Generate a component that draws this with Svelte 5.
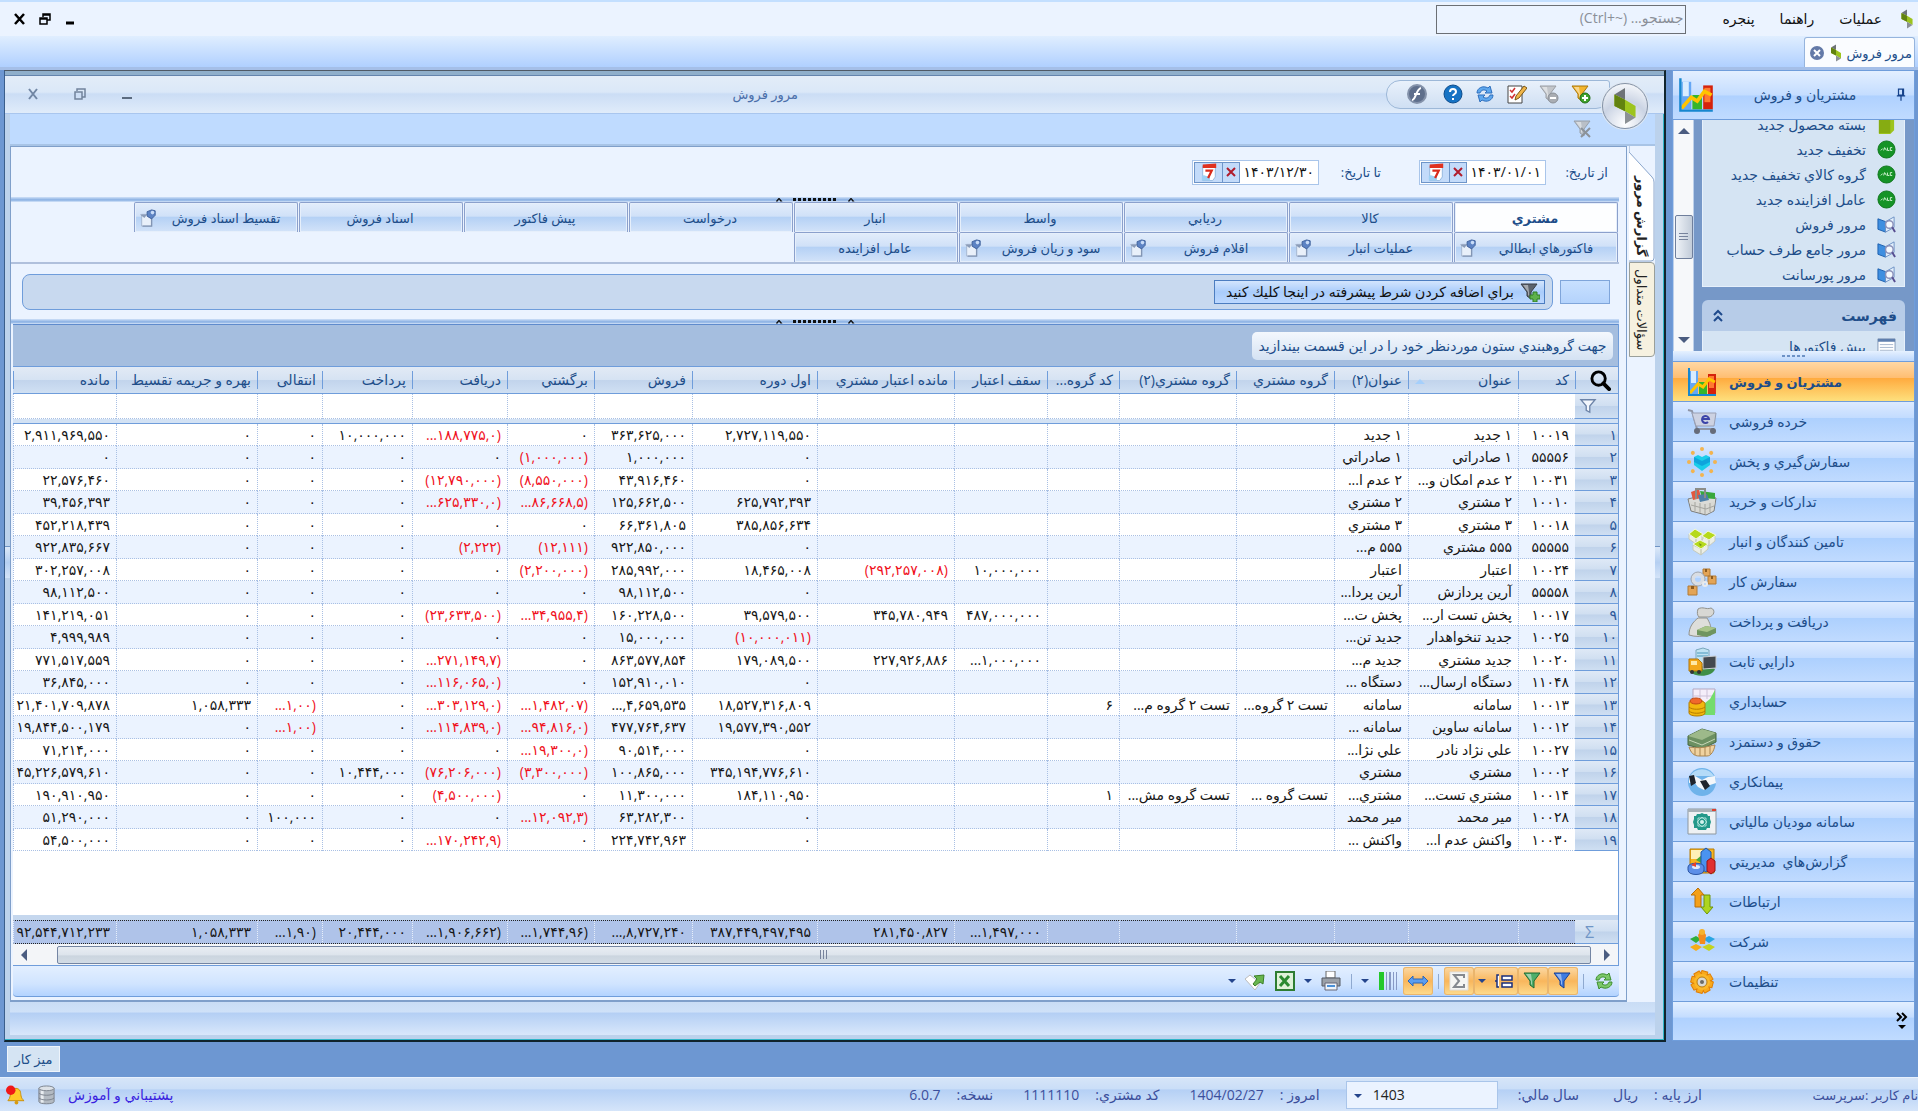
<script lang="ts">
  type Kind = 'num' | 'text';

  interface Column {
    label: string;
    width: number;
    kind: Kind;
    sorted?: boolean;
  }

  const columns: Column[] = [
    { label: 'كد', width: 57, kind: 'text' },
    { label: 'عنوان', width: 110, kind: 'text', sorted: true },
    { label: 'عنوان(٢)', width: 74, kind: 'text' },
    { label: 'گروه مشتري', width: 98, kind: 'text' },
    { label: 'گروه مشتري(٢)', width: 117, kind: 'text' },
    { label: 'كد گروه...', width: 72, kind: 'num' },
    { label: 'سقف اعتبار', width: 93, kind: 'num' },
    { label: 'مانده اعتبار مشتري', width: 137, kind: 'num' },
    { label: 'اول دوره', width: 125, kind: 'num' },
    { label: 'فروش', width: 98, kind: 'num' },
    { label: 'برگشتي', width: 87, kind: 'num' },
    { label: 'دريافت', width: 95, kind: 'num' },
    { label: 'پرداخت', width: 90, kind: 'num' },
    { label: 'انتقالى', width: 65, kind: 'num' },
    { label: 'بهره و جريمه تقسيط', width: 141, kind: 'num' },
    { label: 'مانده', width: 104, kind: 'num' },
  ];

  const rows = [
    ['10019', '1 جديد', '1 جديد', '', '', '', '', '', '2,727,119,550', '363,625,000', '0', '...188,775,0)', '10,000,000', '0', '0', '2,911,969,550'],
    ['55556', '1 صادراتي', '1 صادراتي', '', '', '', '', '', '0', '1,000,000', '(1,000,000)', '0', '0', '0', '0', '0'],
    ['10031', '2 عدم امكان و...', '2 عدم ا...', '', '', '', '', '', '0', '43,916,460', '(8,550,000)', '(12,790,000)', '0', '0', '0', '22,576,460'],
    ['10010', '2 مشتري', '2 مشتري', '', '', '', '', '', '625,792,393', '125,662,500', '...86,668,5)', '...625,330,0)', '0', '0', '0', '39,456,393'],
    ['10018', '3 مشتري', '3 مشتري', '', '', '', '', '', '385,856,634', '66,361,805', '0', '0', '0', '0', '0', '452,218,439'],
    ['55555', '555 مشتري', '555 م...', '', '', '', '', '', '0', '922,850,000', '(12,111)', '(2,222)', '0', '0', '0', '922,835,667'],
    ['10024', 'اعتبار', 'اعتبار', '', '', '', '10,000,000', '(292,257,008)', '18,465,008', '285,992,000', '(2,200,000)', '0', '0', '0', '0', '302,257,008'],
    ['55558', 'آرين پردازش', 'آرين پردا...', '', '', '', '', '', '0', '98,112,500', '0', '0', '0', '0', '0', '98,112,500'],
    ['10017', 'پخش تست ار...', 'پخش ت...', '', '', '', '487,000,000', '345,780,949', '39,579,500', '160,228,500', '...34,955,4)', '(23,633,500)', '0', '0', '0', '141,219,051'],
    ['10025', 'جديد تنخواهدار', 'جديد تن...', '', '', '', '', '', '(10,000,011)', '15,000,000', '0', '0', '0', '0', '0', '4,999,989'],
    ['10020', 'جديد مشتري', 'جديد م...', '', '', '', '...1,000,000', '227,926,886', '179,089,500', '863,577,854', '0', '...271,149,7)', '0', '0', '0', '771,517,559'],
    ['11048', 'دستگاه ارسال...', 'دستگاه ...', '', '', '', '', '', '0', '152,910,010', '0', '...116,065,0)', '0', '0', '0', '36,845,000'],
    ['10013', 'سامانه', 'سامانه', 'تست 2 گروه...', 'تست 2 گروه م...', '6', '', '', '18,527,316,809', '...,4,659,535', '...1,482,07)', '...303,129,0)', '0', '...1,00)', '1,058,333', '21,401,709,878'],
    ['10012', 'سامانه ساوين', 'سامانه ...', '', '', '', '', '', '19,577,390,552', '477,764,637', '...94,816,0)', '...114,839,0)', '0', '...1,00)', '0', '19,844,500,179'],
    ['10027', 'علي نژاد نادر', 'علي نژا...', '', '', '', '', '', '0', '90,514,000', '...19,300,0)', '0', '0', '0', '0', '71,214,000'],
    ['10002', 'مشتري', 'مشتري', '', '', '', '', '', '345,194,776,610', '100,865,000', '(3,300,000)', '(76,206,000)', '10,444,000', '0', '0', '45,226,579,610'],
    ['10014', 'مشتري تست...', 'مشتري...', 'تست گروه ...', 'تست گروه مش...', '1', '', '', '184,110,950', '11,300,000', '0', '(4,500,000)', '0', '0', '0', '190,910,950'],
    ['10028', 'مير محمد', 'مير محمد', '', '', '', '', '', '0', '63,282,300', '...12,092,3)', '0', '0', '100,000', '0', '51,290,000'],
    ['10030', 'واكنش عدم ا...', 'واكنش ...', '', '', '', '', '', '0', '224,742,963', '0', '...170,242,9)', '0', '0', '0', '54,500,000'],
  ];

  const totals = ['', '', '', '', '', '', '...1,497,000', '281,450,827', '387,449,497,495', '...,8,727,240', '...1,744,96)', '...1,906,662)', '20,444,000', '...1,90)', '1,058,333', '92,544,712,233'];

  const topTabs = [
    { label: 'مشتري' },
    { label: 'كالا' },
    { label: 'رديابي' },
    { label: 'واسط' },
    { label: 'انبار' },
    { label: 'درخواست' },
    { label: 'پيش فاكتور' },
    { label: 'اسناد فروش' },
    { label: 'تقسيط اسناد فروش', pinned: true },
  ];
  const bottomTabs = [
    { label: 'فاكتورهاي ابطالي', pinned: true },
    { label: 'عمليات انبار', pinned: true },
    { label: 'اقلام فروش', pinned: true },
    { label: 'سود و زيان فروش', pinned: true },
    { label: 'عامل افزاينده' },
  ];

  const links = [
    { label: 'بسته محصول جديد', icon: 'package' },
    { label: 'تخفيف جديد', icon: 'sale' },
    { label: 'گروه كالاي تخفيف جديد', icon: 'sale' },
    { label: 'عامل افزاينده جديد', icon: 'sale' },
    { label: 'مرور فروش', icon: 'review' },
    { label: 'مرور جامع طرف حساب', icon: 'review' },
    { label: 'مرور پورسانت', icon: 'review' },
  ];

  const modules = [
    { label: 'مشتريان و فروش', icon: 'chart' },
    { label: 'خرده فروشي', icon: 'cart' },
    { label: 'سفارش‌گيري و پخش', icon: 'spread' },
    { label: 'تداركات و خريد', icon: 'basket' },
    { label: 'تامين كنندگان و انبار', icon: 'boxes' },
    { label: 'سفارش كار', icon: 'work' },
    { label: 'دريافت و پرداخت', icon: 'bag' },
    { label: 'دارايي ثابت', icon: 'assets' },
    { label: 'حسابداري', icon: 'coins' },
    { label: 'حقوق و دستمزد', icon: 'salary' },
    { label: 'پيمانكاري', icon: 'hands' },
    { label: 'سامانه موديان مالياتي', icon: 'tax' },
    { label: 'گزارش‌هاي  مديريتي', icon: 'report' },
    { label: 'ارتباطات', icon: 'arrows' },
    { label: 'شركت', icon: 'company' },
    { label: 'تنظيمات', icon: 'gear' },
  ];

  // the shortcut keeps its own left-to-right order inside the Persian hint
  const searchHint = 'جستجو... \u2066(Ctrl+~)\u2069';

  let activeModule = $state(0);
  let activeTab = $state('مشتري');
  let dateFrom = $state(fa('1403/01/01'));
  let dateTo = $state(fa('1403/12/30'));

  function fa(value: string) {
    return value.replace(/\d/g, (d) => '۰۱۲۳۴۵۶۷۸۹'[Number(d)]);
  }

  const angles = [0, 45, 90, 135, 180, 225, 270, 315];
</script>

{#snippet logo()}
  <svg class="logo" viewBox="0 0 24 36" aria-hidden="true">
    <path d="M12 1v11L2 7z" fill="#6e7377" />
    <path d="M2 7l10 5 10 6v11l-10-6L2 18z" fill="#9dc41e" />
    <path d="M2 7l10 5v11L2 18z" fill="#628210" />
    <path d="M22 29l-10 6V23z" fill="#8b9094" />
  </svg>
{/snippet}

{#snippet funnel(fill: string, stroke: string, badge: string)}
  <svg class="ic" viewBox="0 0 20 20" aria-hidden="true">
    <path d="M1 2h16l-6 8v7l-4-3v-4z" {fill} {stroke} />
    <path d="M3 3h5l1 7v4l-1-1v-3z" fill="#fff" opacity=".45" />
    {#if badge === 'plus'}
      <circle cx="14" cy="14" r="5" fill="#3fa32c" stroke="#1e6c14" />
      <path d="M14 11v6M11 14h6" stroke="#fff" stroke-width="2" />
    {:else if badge === 'minus'}
      <circle cx="14" cy="14" r="5" fill="#a9adb3" stroke="#8a8f96" />
      <path d="M11 14h6" stroke="#fff" stroke-width="2" />
    {:else if badge === 'cross'}
      <path d="M8 9l9 9M17 9l-9 9" stroke="#8c9299" stroke-width="2" />
    {:else if badge === 'green'}
      <path d="M13 10h4v3h3v4h-3v3h-4v-3h-3v-4h3z" fill="#5fb24a" stroke="#2f7d22" />
    {/if}
  </svg>
{/snippet}

{#snippet sync(color: string, edge: string)}
  <svg class="ic" viewBox="0 0 20 20" aria-hidden="true">
    <path d="M2 9c0-5 6-8 11-5l2-2 2 7h-7l2-2c-3-2-6-1-7 2z" fill={color} stroke={edge} />
    <path d="M18 11c0 5-6 8-11 5l-2 2-2-7h7l-2 2c3 2 6 1 7-2z" fill={color} stroke={edge} />
  </svg>
{/snippet}

{#snippet calendar()}
  <svg class="ic" viewBox="0 0 20 20" aria-hidden="true">
    <path d="M3 3h14v12l-3 4H3z" fill="#fff" stroke="#8fb4dc" />
    <path d="M2 14c3-3 6 2 9 0v5H2z" fill="#9cd0f4" />
    <path d="M3 1l15-1v5L3 5z" fill="#e0311f" />
    <path d="M6 8h7l-4 8" fill="none" stroke="#d92b1b" stroke-width="2.5" />
  </svg>
{/snippet}

{#snippet icon(name: string)}
  <svg class="mod" viewBox="0 0 30 30" aria-hidden="true">
    {#if name === 'chart'}
      <path d="M3 4h8v23H3z" fill="#65a7f5" /><path d="M4 4h5v12H4z" fill="#d9ecff" />
      <path d="M12 15h8v12h-8z" fill="#35b52c" />
      <path d="M21 7h8v20h-8z" fill="#d5220c" /><path d="M22 9h5v12h-5z" fill="#ff7a30" />
      <path d="M3 26l8-9 5 3 6-8 6 3" fill="none" stroke="#ffc400" stroke-width="3" />
      <path d="M2 1v27h27" fill="none" stroke="#1787cf" stroke-width="2" />
    {:else if name === 'cart'}
      <path d="M1 3l4 1 5 18h17" fill="none" stroke="#8f95a6" stroke-width="2" />
      <path d="M5 6h24l-2 13H9z" fill="#cdd2e2" stroke="#9aa0b4" />
      <path d="M16 12h6a3.500 3.500 0 1 0-1 3" fill="none" stroke="#3c44a8" stroke-width="2" />
      <circle cx="10" cy="24" r="3" fill="#666c7a" /><circle cx="26" cy="24" r="3" fill="#666c7a" />
    {:else if name === 'spread'}
      {#each angles as a}
        <circle cx="15" cy="2" r="2" fill="#f2b450" transform="rotate({a} 15 15)" />
      {/each}
      <path d="M7 10l4-2 4 2 4-2 4 2v8l-8 6-8-6z" fill="#19cdea" />
      <path d="M7 10l8 4 8-4v5l-8 4-8-4z" fill="#0fa4dc" />
    {:else if name === 'basket'}
      <path d="M1 12l16-4 12 3-2 13-8 4L4 24z" fill="#dcdcd8" stroke="#7d7d7a" />
      <path d="M4 5l8-3 2 9-8 2z" fill="#e2583e" /><path d="M13 4l15 2v6l-13-1z" fill="#38a83c" />
      <path d="M11 8l9-1 2 6-9 2z" fill="#4d7fa8" />
      <path d="M2 14l16 3 10-3-2 10-7 3-14-4z" fill="#d9d9d4" />
      <path d="M4 18l15 4 8-3M8 15v9M13 16v10M18 17v10M23 16v9" fill="none" stroke="#a5a59f" />
      <path d="M9 12V2h9v9" fill="none" stroke="#8d8d88" stroke-width="2" />
    {:else if name === 'boxes'}
      <path d="M2 7l7 4v6l-7-5zM9 11l7-4v5l-7 5zM15 9l7 4v6l-7-5zM22 13l6-5v6l-6 5zM6 18l8 4v6l-8-5zM14 22l7-5v5l-7 6z" fill="#eceee6" stroke="#c6cabb" />
      <path d="M2 7l6-5 8 5-7 5zM15 9l6-5 8 4-7 5zM6 17l7-4 8 4-7 5z" fill="#b6d91c" stroke="#f4f8e0" />
      <path d="M12 16l3 2-2 1z" fill="#6f8f10" />
    {:else if name === 'work'}
      <path d="M16 2h7v7h-7zM21 9h8v8h-8zM1 19h9v9H1z" fill="#e3a456" stroke="#b27a34" />
      <path d="M18 2h2v3h-2zM24 9h2v3h-2zM4 19h3v3H4z" fill="#8c5a1e" />
      <circle cx="11" cy="12" r="5" fill="none" stroke="#d9dde3" stroke-width="4" />
      <circle cx="11" cy="12" r="7" fill="none" stroke="#9ea4ad" />
      <circle cx="18" cy="17" r="2" fill="none" stroke="#e9ebee" stroke-width="2" />
    {:else if name === 'bag'}
      <path d="M11 2c5-3 8 1 13-1 5 2 3 8-2 9H12c-2-2-2-5-1-8z" fill="#d8d8d4" stroke="#92928d" />
      <path d="M11 11h9c3 5 5 10 4 17-8 2-16 2-22 0 0-8 4-13 9-17z" fill="#dededa" stroke="#92928d" />
      <path d="M10 23l9-4 10 2v5l-9 4-10-2z" fill="#6f9560" /><path d="M10 23l9-4 10 2-9 4z" fill="#a8c489" />
    {:else if name === 'assets'}
      <path d="M2 24c6-6 20-6 26-2-2 7-18 10-26 2z" fill="#3f8e47" />
      <path d="M9 3l7-2 6 2v12l-6 3-7-3z" fill="#bfe2f2" stroke="#7aa7bc" /><path d="M10 6h11M10 9h11" stroke="#4a98bb" />
      <path d="M16 10l13-1v12l-13 1z" fill="#43484e" stroke="#c9ccd0" />
      <path d="M2 12h9l4 4v8H2z" fill="#f3a81b" stroke="#b1740b" /><path d="M4 14h6v4H4z" fill="#ffe9a6" />
      <circle cx="5" cy="25" r="2" fill="#333" /><circle cx="12" cy="25" r="2" fill="#333" />
    {:else if name === 'coins'}
      <path d="M6 2h22v24H6z" fill="#f5eefa" stroke="#b5a8c0" /><path d="M13 2v10M20 2v10M6 9h22" stroke="#cdc1d8" />
      <path d="M16 28l2-12 5-4 5-9v25z" fill="#74dc6c" />
      <path d="M2 16v10c0 4 16 4 16 0v-9c0-5-16-5-16-1z" fill="#f2b80e" stroke="#b57c00" />
      <path d="M2 20c3 3 12 3 16 0M2 24c3 3 12 3 16 0" fill="none" stroke="#b57c00" />
      <ellipse cx="9" cy="14" rx="6" ry="3" fill="#f0682c" stroke="#c04812" />
    {:else if name === 'salary'}
      <path d="M1 9l14-7 14 4v9l-14 7L1 18z" fill="#6c9062" stroke="#47683f" />
      <path d="M1 9l14-7 14 4-14 7z" fill="#9db98a" /><path d="M2 13l13 5 13-6" fill="none" stroke="#c8d8b8" />
      <path d="M2 20c2 6 5 9 10 9h8c4 0 7-5 8-11-8 1-10 4-26 2z" fill="#f0d2a0" stroke="#a98550" />
      <path d="M8 21v7M13 21v8M18 20v9M23 19v8" stroke="#a98550" />
    {:else if name === 'hands'}
      <circle cx="15" cy="15" r="14" fill="#6fb3ea" /><path d="M3 9a14 14 0 0 1 24 0z" fill="#b4dbf8" />
      <path d="M2 11l6-2 7 4 6-3 7-1 1 7-6 2-6 5-6-3-4-5-5 1z" fill="#f4f7fa" />
      <path d="M2 9l5-1 2 8-5 3zM13 14l6-1 4 6-5 4z" fill="#1e242c" />
    {:else if name === 'tax'}
      <path d="M1 2h28v25H1z" fill="#eef1f3" stroke="#8d979f" /><path d="M1 2h28v3H1z" fill="#a7b1b8" /><path d="M25 2h4v2h-4z" fill="#de4030" />
      <path d="M10 7h3l2-1 2 1h3l1 2h2v3l1 3-1 3v3h-3l-1 2h-8l-1-2H7v-3l-1-3 1-3V9h2z" fill="#23998a" />
      <path d="M11 11h8v8h-8zM15 10l5 5-5 5-5-5z" fill="none" stroke="#a9e0d6" /><circle cx="15" cy="15" r="2" fill="#d4f2ec" />
    {:else if name === 'report'}
      <path d="M3 2h24v24H3z" fill="#f8b41e" stroke="#b67a04" /><path d="M4 3h14v9H4z" fill="#fff0b8" />
      <path d="M9 13l7-6v10z" fill="#4aa83c" />
      <path d="M14 5l5-4 5 4v17l-5 3-5-3z" fill="#4a93ef" stroke="#1f57a5" />
      <path d="M20 14l4-3 4 3v10l-4 3-4-3z" fill="#e03030" stroke="#961414" />
      <path d="M1 20c0-5 16-5 16 0v3c0 6-16 6-16 0z" fill="#5d8fe8" stroke="#2b55a5" /><ellipse cx="9" cy="20" rx="4" ry="2" fill="#dfe9fb" />
      <path d="M4 18l5-3v5z" fill="#e8402c" />
    {:else if name === 'arrows'}
      <path d="M8 20V8H4l7-7 6 7h-3v12z" fill="#f4a019" stroke="#b96f06" />
      <path d="M17 8h6v12h3l-6 7-6-7h3z" fill="#aed51f" stroke="#6f940c" />
    {:else if name === 'company'}
      <path d="M3 12l6-3 5 3-5 4z" fill="#2fae3c" /><path d="M16 12l6-3 6 3-6 4z" fill="#2aa6e2" />
      <path d="M3 20l6-3 6 3-6 4z" fill="#f6ad18" /><path d="M15 20l7-3 6 3-6 4z" fill="#c3d31e" />
      <path d="M11 8l4-6 4 6-1 9h-5z" fill="#f28c1c" /><circle cx="15" cy="5" r="3" fill="#f6b32c" />
    {:else}
      {#each angles as a}
        <path d="M12 4h6l1 6h-8z" fill="#f8a91c" stroke="#e07f06" transform="rotate({a + 15} 15 15)" />
      {/each}
      <circle cx="15" cy="15" r="8" fill="#fbb828" /><circle cx="15" cy="15" r="5" fill="#d9d9d2" stroke="#b67b14" />
      <circle cx="15" cy="15" r="2" fill="#6b6b66" />
    {/if}
  </svg>
{/snippet}

{#snippet linkIcon(name: string)}
  <svg class="ic" viewBox="0 0 20 20" aria-hidden="true">
    {#if name === 'package'}
      <path d="M2 3l5-3h11v16l-4 4H2z" fill="#9dc41e" /><path d="M2 5h12v14H2z" fill="#86ac12" />
    {:else if name === 'sale'}
      <circle cx="10" cy="10" r="9" fill="#159326" stroke="#0b7418" />
      <path d="M4 11l2-2M7 11l1-3 2 3M11 8v3h2M16 8h-2v3h2" fill="none" stroke="#d8f5d8" />
    {:else if name === 'review'}
      <path d="M1 4l8 3v11l-8-3z" fill="#3f8fe0" stroke="#1c5fae" /><path d="M9 7l9-5v11l-9 5z" fill="#e4f0fc" stroke="#6a90c4" />
      <circle cx="13" cy="10" r="4" fill="#fff" fill-opacity=".6" stroke="#8a8fb8" stroke-width="1.500" /><path d="M16 13l3 5" stroke="#574d90" stroke-width="2" />
    {:else}
      <path d="M1 2h18v18H1z" fill="#fff" stroke="#8298b8" /><path d="M1 2h18v3H1z" fill="#5f7fae" /><path d="M3 8h14M3 11h14M3 14h14" stroke="#a7b7cf" />
    {/if}
  </svg>
{/snippet}

{#snippet cols()}
  <colgroup>
    <col style:width="43px" />
    {#each columns as col, i}
      <col style:width={i === columns.length - 1 ? 'auto' : `${col.width}px`} />
    {/each}
  </colgroup>
{/snippet}

{#snippet splitter()}
  <div class="splitter" aria-hidden="true"><i></i><b></b><i></i></div>
{/snippet}

{#snippet tabRow(tabs: { label: string; pinned?: boolean }[])}
  <div class="tab-row" role="tablist">
    {#each tabs as tab}
      <button
        class="tab"
        class:active={activeTab === tab.label}
        role="tab"
        aria-selected={activeTab === tab.label}
        onclick={() => (activeTab = tab.label)}
      >
        <span>{tab.label}</span>
        {#if tab.pinned}
          <svg class="pin-doc" viewBox="0 0 20 20" aria-hidden="true">
            <path d="M3 6h11v13H3z" fill="#e9f0fa" stroke="#a3b4ce" /><path d="M4 19h10V8" fill="none" stroke="#8295b4" stroke-width="1.500" />
            <path d="M1 6h8l-3 4z" fill="#8b9cb8" />
            <path d="M9 3l5-2 4 1v5l-4 4-5-3z" fill="#5d83c4" stroke="#3b5d99" /><circle cx="15" cy="4" r="2" fill="#c8dcf8" />
          </svg>
        {/if}
      </button>
    {/each}
  </div>
{/snippet}

<div class="app" dir="rtl">
  <header class="menubar">
    {@render logo()}
    <nav>
      <a href="#ops">عمليات</a>
      <a href="#help">راهنما</a>
      <a href="#window">پنجره</a>
    </nav>
    <input class="search" type="text" aria-label="جستجو" placeholder={searchHint} />
    <div class="win-buttons">
      <button aria-label="كوچك كردن"><svg viewBox="0 0 12 12"><path d="M2 10h8" stroke="#000" stroke-width="3" /></svg></button>
      <button aria-label="بازگرداندن"><svg viewBox="0 0 12 12"><path d="M4 4V1h7v6H8M1 5h7v6H1zM1 6h7M4 2h7" fill="none" stroke="#000" stroke-width="1.500" /></svg></button>
      <button aria-label="بستن"><svg viewBox="0 0 12 12"><path d="M1 1l9 10M10 1L1 11" stroke="#000" stroke-width="2.500" /></svg></button>
    </div>
  </header>

  <div class="doc-tabs">
    <div class="doc-tab">
      <span>مرور فروش</span>
      {@render logo()}
      <button aria-label="بستن برگه">
        <svg viewBox="0 0 16 16"><circle cx="8" cy="8" r="7" fill="#647aa8" /><path d="M5 5l6 6M11 5l-6 6" stroke="#fff" stroke-width="2" /></svg>
      </button>
    </div>
  </div>

  <div class="desktop">
    <aside class="sidebar">
      <div class="side-head">
        <svg class="pin" viewBox="0 0 12 16" aria-hidden="true"><path d="M3 1h6v7H3zM1 9h10M6 9v6M8 1v7" fill="none" stroke="#15428b" stroke-width="1.500" /></svg>
        <span>مشتريان و فروش</span>
        {@render icon('chart')}
      </div>
      <div class="side-scroll">
        <div class="panels">
          <ul class="links">
            {#each links as link}
              <li>{@render linkIcon(link.icon)}<a href="#link">{link.label}</a></li>
            {/each}
          </ul>
          <div class="panel-head">
            <strong>فهرست</strong>
            <svg viewBox="0 0 12 14" aria-hidden="true"><path d="M2 6l4-4 4 4M2 12l4-4 4 4" fill="none" stroke="#1f4a8c" stroke-width="2" /></svg>
          </div>
          <ul class="links next">
            <li>{@render linkIcon('list')}<a href="#invoices">پيش فاكتورها</a></li>
          </ul>
        </div>
        <div class="vbar" aria-hidden="true">
          <span class="up"></span>
          <span class="vthumb"></span>
          <span class="down"></span>
        </div>
      </div>
      <div class="side-split" aria-hidden="true"><b></b></div>
      <nav class="modules">
        {#each modules as mod, i}
          <button class:current={i === activeModule} onclick={() => (activeModule = i)}>
            {@render icon(mod.icon)}<span>{mod.label}</span>
          </button>
        {/each}
      </nav>
      <button class="more" aria-label="بيشتر">
        <svg viewBox="0 0 12 18"><path d="M1 1l4 4-4 4M6 1l4 4-4 4" fill="none" stroke="#000" stroke-width="2" /><path d="M2 13h8l-4 4z" /></svg>
      </button>
    </aside>

    <main class="window">
      <div class="titlebar">
        <div class="quick">
          <button aria-label="افزودن فيلتر">{@render funnel('#f3b52c', '#a97608', 'plus')}</button>
          <button aria-label="حذف فيلتر">{@render funnel('#c3c6ca', '#9a9ea4', 'minus')}</button>
          <button aria-label="ويرايش">
            <svg class="ic" viewBox="0 0 20 20"><path d="M1 2h14v17H1z" fill="#fff" stroke="#444" /><path d="M3 6l2 2 3-4M3 12l2 2 3-4" fill="none" stroke="#d03030" stroke-width="1.500" /><path d="M9 12l8-10 3 2-8 10-4 2z" fill="#f0b64a" stroke="#7b5716" /></svg>
          </button>
          <button aria-label="بازخواني">{@render sync('#5fa8ee', '#2f6fbd')}</button>
          <button aria-label="راهنما">
            <svg class="ic" viewBox="0 0 20 20"><circle cx="10" cy="10" r="9" fill="#1673c4" stroke="#0d4c8c" /><path d="M7 8c0-4 6-4 6 0 0 2-3 2-3 4M10 14v2" fill="none" stroke="#fff" stroke-width="2" /></svg>
          </button>
          <button class="flash" aria-label="اجرا">
            <svg class="ic" viewBox="0 0 20 20"><circle cx="10" cy="10" r="9" fill="#5f6f8c" stroke="#8593ab" stroke-width="2" /><path d="M5 16c4 0 4-11 9-12M7 10h6" fill="none" stroke="#fff" stroke-width="2" /></svg>
          </button>
        </div>
        <h1>مرور فروش</h1>
        <div class="child-buttons">
          <button aria-label="كوچك كردن پنجره"><svg viewBox="0 0 12 12"><path d="M1 10h10" stroke="#5b6b80" stroke-width="2" /></svg></button>
          <button aria-label="بازگرداندن پنجره"><svg viewBox="0 0 12 12"><path d="M3 3V1h8v8H8M1 4h7v7H1z" fill="none" stroke="#71839c" stroke-width="1.500" /></svg></button>
          <button aria-label="بستن پنجره"><svg viewBox="0 0 12 12"><path d="M2 1l8 10M10 1L2 11" stroke="#7186a4" stroke-width="2" /></svg></button>
        </div>
        <div class="orb">{@render logo()}</div>
      </div>
      <div class="subbar">
        <button aria-label="پاك كردن فيلتر">{@render funnel('#b9bfc7', '#98a0aa', 'cross')}</button>
      </div>

      <div class="body">
        <div class="side-tabs">
          <button class="side-tab first">
            <svg viewBox="0 0 26 116" preserveAspectRatio="none" aria-hidden="true"><path d="M0 0v6l23 25q2 2 2 5v76q0 3-3 3H0" fill="#fff" stroke="#8aa6cc" /></svg>
            <span>گزارش مرور</span>
          </button>
          <button class="side-tab"><span>سؤالات متداول</span></button>
        </div>

        <section class="content">
          <div class="dates">
            <label for="from">از تاريخ:</label>
            <div class="date">
              <input id="from" type="text" bind:value={dateFrom} />
              <button aria-label="پاك كردن" onclick={() => (dateFrom = '')}><svg viewBox="0 0 12 12"><path d="M2 2l8 8M10 2l-8 8" stroke="#b01c2c" stroke-width="2" /></svg></button>
              <button class="cal" aria-label="تقويم">{@render calendar()}</button>
            </div>
            <label for="to">تا تاريخ:</label>
            <div class="date">
              <input id="to" type="text" bind:value={dateTo} />
              <button aria-label="پاك كردن" onclick={() => (dateTo = '')}><svg viewBox="0 0 12 12"><path d="M2 2l8 8M10 2l-8 8" stroke="#b01c2c" stroke-width="2" /></svg></button>
              <button class="cal" aria-label="تقويم">{@render calendar()}</button>
            </div>
          </div>
          {@render splitter()}
          <div class="tabs">
            {@render tabRow(topTabs)}
            {@render tabRow(bottomTabs)}
          </div>
          <div class="filters">
            <button class="blank" aria-label="شرط"></button>
            <div class="filter-box">
              <button>
                {@render funnel('#5c636c', '#3a3f46', 'green')}
                براي اضافه كردن شرط پيشرفته در اينجا كليك كنيد
              </button>
            </div>
          </div>
          {@render splitter()}

          <div class="grid">
            <div class="group-bar"><span>جهت گروهبندي ستون موردنظر خود را در اين قسمت بيندازيد</span></div>
            <table>
              {@render cols()}
              <thead>
                <tr class="heads">
                  <th class="find">
                    <svg viewBox="0 0 22 22" aria-label="جستجو"><circle cx="9" cy="9" r="7" fill="none" stroke="#000" stroke-width="3" /><path d="M14 14l6 6" stroke="#000" stroke-width="4" stroke-linecap="round" /></svg>
                  </th>
                  {#each columns as col}
                    <th>{col.label}{#if col.sorted}<i class="sort"></i>{/if}</th>
                  {/each}
                </tr>
                <tr class="filter-row">
                  <td class="no">
                    <svg viewBox="0 0 18 18" aria-hidden="true"><path d="M1 2h16l-6 7v7l-4-2V9z" fill="#f2f6fc" stroke="#6d84a8" stroke-width="1.500" /></svg>
                  </td>
                  {#each columns as _}<td></td>{/each}
                </tr>
                <tr class="gap"><td colspan={columns.length + 1}></td></tr>
              </thead>
              <tbody>
                {#each rows as row, r}
                  <tr>
                    <td class="no">{fa(String(r + 1))}</td>
                    {#each row as cell, c}
                      <td class:neg={columns[c].kind === 'num' && cell.endsWith(')')}>
                        {#if columns[c].kind === 'num'}<bdo dir="ltr">{fa(cell)}</bdo>{:else}{fa(cell)}{/if}
                      </td>
                    {/each}
                  </tr>
                {/each}
              </tbody>
            </table>
            <div class="empty"></div>
            <table class="totals">
              {@render cols()}
              <tbody>
                <tr>
                  <td class="no">Σ</td>
                  {#each totals as cell}
                    <td><bdo dir="ltr">{fa(cell)}</bdo></td>
                  {/each}
                </tr>
              </tbody>
            </table>
            <div class="hbar" aria-hidden="true">
              <span class="go-right"></span>
              <span class="hthumb"><b></b></span>
              <span class="go-left"></span>
            </div>
          </div>

          <div class="tools">
            <button aria-label="بازخواني جدول">{@render sync('#7cc86a', '#3d8f2e')}</button>
            <hr />
            <button class="on" aria-label="فيلتر">{@render funnel('#3f7be0', '#173f92', '')}</button>
            <button class="on" aria-label="فيلتر سبز">{@render funnel('#4fae6a', '#1f6b35', '')}</button>
            <button class="on wide" aria-label="گروهبندي">
              <svg class="ic" viewBox="0 0 20 20"><path d="M8 5h10v4H8zM8 12h10v4H8zM5 4H3v12h2M1 10h2" fill="#fff" stroke="#1b2f7c" stroke-width="1.500" /></svg>
              <i class="caret"></i>
            </button>
            <button class="on" aria-label="جمع">
              <svg class="ic" viewBox="0 0 20 20"><path d="M1 1h18v18H1z" fill="#f5f5f3" stroke="#ddd" /><path d="M15 7V4H5l5 6-5 6h10v-3" fill="none" stroke="#85898f" stroke-width="2" /></svg>
            </button>
            <hr />
            <button class="on" aria-label="عرض ستون‌ها">
              <svg class="ic" viewBox="0 0 20 20"><path d="M0 10l5-5v3h10V5l5 5-5 5v-3H5v3z" fill="#5b9df0" stroke="#2d66b8" /></svg>
            </button>
            <button aria-label="ستون‌ها">
              <svg class="ic" viewBox="0 0 20 20"><path d="M1 1h5v18H1z" fill="#23c82b" /><path d="M8 1h1v18H8zM11 1h2v18h-2zM15 1h1v18h-1zM18 1h1v18h-1z" fill="#8899c4" /></svg>
            </button>
            <i class="caret"></i>
            <hr />
            <button aria-label="چاپ">
              <svg class="ic" viewBox="0 0 20 20"><path d="M5 0h9v7H5z" fill="#fff" stroke="#666" /><path d="M1 7h18v8H1z" fill="#9ba1a9" stroke="#555b64" /><path d="M4 12h12v7H4z" fill="#edf3fa" stroke="#667" /><path d="M6 15h8" stroke="#4a90d8" stroke-width="2" /></svg>
            </button>
            <i class="caret"></i>
            <button aria-label="اكسل">
              <svg class="ic" viewBox="0 0 20 20"><path d="M1 1h18v18H1z" fill="#dff2d8" stroke="#2e7d32" stroke-width="2" /><path d="M5 5l9 10M14 5L5 15" stroke="#2a8a2f" stroke-width="3" /></svg>
            </button>
            <button aria-label="ارسال">
              <svg class="ic" viewBox="0 0 20 20"><path d="M0 8l5-4 10 8-5 7z" fill="#fff" stroke="#bbb" /><path d="M8 13l4-5-3-3 10-1-1 9-3-2-5 4z" fill="#68b54e" stroke="#3a7f27" /></svg>
            </button>
            <i class="caret"></i>
          </div>
        </section>
      </div>
      <div class="child-status"></div>
      <i class="notch near"></i>
      <i class="notch far"></i>
    </main>
  </div>

  <div class="dock"><button>ميز كار</button></div>

  <footer class="status">
    <span class="user">نام كاربر :سرپرست</span>
    <span>ارز پايه :</span>
    <span>ريال</span>
    <label for="year">سال مالي:</label>
    <div class="year">
      <select id="year"><option>1403</option></select>
      <i class="caret"></i>
    </div>
    <span>امروز :</span>
    <span>1404/02/27</span>
    <span class="wide-gap">كد مشتري:</span>
    <span>1111110</span>
    <span class="wide-gap">نسخه:</span>
    <span>6.0.7</span>
    <div class="support">
      <a href="#support">پشتيباني و آموزش</a>
      <svg viewBox="0 0 20 20" aria-hidden="true"><path d="M2 3v14c0 3 16 3 16 0V3z" fill="#b3bac2" stroke="#7a828c" /><path d="M4 5v13h3V5z" fill="#e8ecf0" /><ellipse cx="10" cy="3" rx="8" ry="2.500" fill="#dde2e7" stroke="#7a828c" /><path d="M2 8c2 3 14 3 16 0M2 13c2 3 14 3 16 0" fill="none" stroke="#7a828c" /></svg>
      <svg viewBox="0 0 20 20" aria-hidden="true"><path d="M2 16c3-3 2-7 4-10 2-4 7-4 9 0 1 3 0 7 4 10z" fill="#ffc928" stroke="#c98e08" /><circle cx="11" cy="18" r="2" fill="#d89a10" /><circle cx="5" cy="5" r="5" fill="#f01818" /></svg>
    </div>
  </footer>
</div>

<style>
  :global(body) {
    margin: 0;
    overflow: hidden;
  }
  .app {
    --line: #6f9ddb;
    --ink: #204d89;
    --glossy: linear-gradient(#e3edfb 0%, #d0e1f8 45%, #b5d1f5 50%, #d3e3f9 100%);
    display: flex;
    flex-direction: column;
    height: 100vh;
    font: 14px/20px 'Open Sans', 'DejaVu Sans', sans-serif;
    color: var(--ink);
    background: #6d97d2;
  }
  .app * {
    box-sizing: border-box;
  }
  button, input, select {
    font: inherit;
    color: inherit;
  }
  button {
    display: flex;
    align-items: center;
    justify-content: center;
    padding: 0;
    border: 0;
    background: none;
  }
  a {
    color: inherit;
    text-decoration: none;
  }
  svg {
    display: block;
    flex: none;
  }
  .ic {
    width: 20px;
    height: 20px;
  }
  .logo {
    width: 14px;
    height: 20px;
  }
  .mod {
    width: 30px;
    height: 30px;
  }

  /* menu and document tabs */
  .menubar {
    display: flex;
    align-items: center;
    height: 36px;
    padding: 0 4px 0 14px;
    border-top: 2px solid #c3dfff;
    background: #ebf3ff;
  }
  .menubar nav {
    display: flex;
    gap: 25px;
    margin: 0 18px 0 36px;
    color: #111;
  }
  .search {
    width: 250px;
    height: 29px;
    padding: 0 2px 4px;
    border: 1px solid #6b6f75;
    background: #ebf3ff;
  }
  .search::placeholder {
    color: #8a8f98;
    opacity: 1;
  }
  .win-buttons {
    display: flex;
    gap: 13px;
    margin-right: auto;
  }
  .win-buttons svg,
  .child-buttons svg,
  .date svg {
    width: 12px;
    height: 12px;
  }
  .doc-tabs {
    display: flex;
    height: 34px;
    padding: 1px 3px 0;
    border-bottom: 3px solid #a5bfe8;
    background: linear-gradient(#e0eeff, #b0d0ff);
  }
  .doc-tab {
    display: flex;
    align-items: center;
    justify-content: space-between;
    width: 111px;
    padding: 0 2px 0 4px;
    border: 1px solid #96b4dd;
    border-bottom: 0;
    border-radius: 3px 3px 0 0;
    background: #fafcff;
    font-size: 13px;
    white-space: nowrap;
  }
  .doc-tab svg {
    height: 16px;
  }
  .doc-tab .logo {
    height: 18px;
  }

  .desktop {
    display: flex;
    flex: 1;
    min-height: 0;
    gap: 6px;
    padding: 0 3px 0 4px;
  }

  /* sidebar */
  .sidebar {
    display: flex;
    flex-direction: column;
    width: 243px;
    margin-bottom: 1px;
    border: 1px solid var(--line);
  }
  .side-head {
    display: flex;
    align-items: center;
    justify-content: space-between;
    height: 49px;
    padding: 0 8px 0 5px;
    border-bottom: 1px solid var(--line);
    background: linear-gradient(#e3efff 0%, #c4ddff 50%, #afd1ff 52%, #c0dbff 100%);
  }
  .side-head .mod {
    width: 36px;
    height: 38px;
  }
  .pin {
    width: 10px;
    height: 14px;
  }
  .side-scroll {
    display: flex;
    flex: 1;
    min-height: 0;
    overflow: hidden;
    background: #7698c8;
  }
  .panels {
    flex: 1;
    padding: 0 9px 0 8px;
    overflow: hidden;
  }
  .links {
    height: 167px;
    margin: 0;
    padding: 0 8px;
    overflow: hidden;
    list-style: none;
    border: solid #e6f0fb;
    border-width: 0 1px 1px;
    background: #d5e4f3;
  }
  .links li {
    display: flex;
    align-items: center;
    gap: 11px;
    height: 25px;
  }
  .links li:first-child {
    margin-top: -8px;
  }
  .links .ic {
    width: 19px;
    height: 19px;
  }
  .panel-head {
    display: flex;
    align-items: center;
    justify-content: space-between;
    height: 31px;
    margin-top: 13px;
    padding: 0 8px 0 10px;
    border-radius: 6px 6px 0 0;
    background: #b7cce8;
  }
  .panel-head svg {
    width: 12px;
    height: 14px;
  }
  .links.next {
    height: 60px;
  }
  .links.next li {
    margin-top: 3px;
  }
  .vbar {
    display: flex;
    flex-direction: column;
    align-items: center;
    width: 21px;
    padding: 8px 0;
    border: solid #bdd0ea;
    border-width: 0 1px;
    background: #f6f8fa;
  }
  .up, .down, .go-left, .go-right {
    border: 6px solid transparent;
  }
  .up {
    border-top: 0;
    border-bottom-color: #4a5c80;
  }
  .down {
    margin-top: auto;
    border-bottom: 0;
    border-top-color: #4a5c80;
  }
  .vthumb {
    width: 18px;
    height: 44px;
    margin-top: 81px;
    border: 1px solid #6f7f9c;
    border-radius: 2px;
    background:
      repeating-linear-gradient(#77839c 0 1px, transparent 1px 3px) center / 9px 9px no-repeat,
      linear-gradient(90deg, #eef2f7, #c2ccd9);
  }
  .side-split {
    display: flex;
    justify-content: center;
    height: 11px;
    padding-top: 4px;
    border-bottom: 1px solid var(--line);
    background: linear-gradient(#e6f1ff, #bcd7fc);
  }
  .side-split b {
    width: 24px;
    height: 2px;
    background: repeating-linear-gradient(90deg, #6d92c6 0 3px, transparent 3px 5px);
  }
  .modules button {
    gap: 12px;
    justify-content: flex-start;
    width: 100%;
    height: 40px;
    padding-left: 14px;
    border-bottom: 1px solid var(--line);
    background: linear-gradient(#ddeaff 0%, #c3dcff 40%, #add0fe 42%, #c0dbff 100%);
    direction: ltr;
  }
  .modules span {
    white-space: pre;
    direction: rtl;
  }
  .modules .current {
    font-size: 13px;
    font-weight: 700;
    background: linear-gradient(#ffd8a5 0%, #ffbe72 40%, #ffab3f 42%, #fee07d 100%);
  }
  .more {
    justify-content: flex-start;
    height: 38px;
    padding-right: 6px;
    background: linear-gradient(#e3efff 0%, #c4ddff 40%, #afd1ff 42%, #c0dbff 100%);
  }
  .more svg {
    width: 12px;
    height: 18px;
  }

  /* child window */
  .window {
    position: relative;
    display: flex;
    flex: 1;
    flex-direction: column;
    min-width: 0;
    padding: 0 9px 0 5px;
    border-top: 1px solid #4f5a66;
    border-right: 2px solid #10242c;
    border-bottom: 2px solid #10242c;
    border-left: 1px solid #3a5e8c;
    background: #bcd2ec;
    box-shadow: inset -1px -1px #30b4c8;
  }
  .titlebar {
    position: relative;
    display: flex;
    align-items: center;
    height: 43px;
    margin: 0 -9px 0 -5px;
    padding: 0 54px 0 20px;
    border-top: 4px solid #8fafcb;
    border-bottom: 1px solid #a9c6ee;
    background: linear-gradient(#e3edf8 0%, #dbe8f8 45%, #cbddf5 50%, #e0ecfa 100%);
    box-shadow: inset 0 1px #6484ad;
  }
  .quick {
    display: flex;
    align-items: center;
    gap: 12px;
    width: 224px;
    height: 29px;
    padding: 0 18px 0 0;
    border: 1px solid #9db8d8;
    border-radius: 14px 3px 14px 14px;
    background: linear-gradient(#e9f1fb, #cfdff3);
  }
  .flash {
    margin-right: 4px;
  }
  h1 {
    flex: 1;
    margin: 0;
    padding-right: 588px;
    font-size: 13px;
    font-weight: 400;
    line-height: 20px;
    color: #4a6ea9;
  }
  .child-buttons {
    display: flex;
    gap: 35px;
    padding-left: 2px;
  }
  .orb {
    position: absolute;
    top: 8px;
    right: 16px;
    z-index: 1;
    display: grid;
    place-items: center;
    width: 46px;
    height: 46px;
    border: 1px solid #8592a4;
    border-radius: 50%;
    background: radial-gradient(circle at 50% 90%, #fff 0%, #cbd4e4 50%, #f7f9fc 90%);
    box-shadow: 0 0 0 1px #dfe7f1;
  }
  .orb .logo {
    width: 26px;
    height: 38px;
  }
  .subbar {
    display: flex;
    align-items: center;
    height: 32px;
    padding: 0 62px 0 0;
    border-bottom: 2px solid #a8c4e6;
    background: #bfdbff;
  }
  .body {
    display: flex;
    flex: 1;
    min-height: 0;
    background: #ebf3ff;
  }
  .side-tabs {
    width: 28px;
    padding-left: 2px;
  }
  .side-tab {
    position: relative;
    width: 26px;
    height: 95px;
    border: 1px solid #9a9f9a;
    border-radius: 0 4px 4px 0;
    background: #f6f1e0;
    color: #222;
    font-size: 13px;
  }
  .side-tab span {
    position: relative;
    writing-mode: vertical-rl;
    white-space: nowrap;
  }
  .side-tab.first {
    height: 116px;
    padding-top: 24px;
    border: 0;
    background: none;
    font-weight: 700;
  }
  .side-tab svg {
    position: absolute;
    inset: 0;
    width: 100%;
    height: 100%;
  }
  .content {
    display: flex;
    flex: 1;
    flex-direction: column;
    min-width: 0;
    padding: 0 7px 3px 2px;
    border: 1px solid #7f9fca;
    border-bottom-width: 2px;
    background: #ebf3ff;
  }
  .dates {
    display: flex;
    align-items: center;
    height: 50px;
    padding: 0 11px 0 0;
  }
  .dates label {
    width: 62px;
    font-size: 13px;
  }
  .date {
    display: flex;
    align-items: stretch;
    width: 127px;
    height: 25px;
    margin-left: 38px;
    padding: 1px;
    border: 1px solid #a9c5ea;
    background: #fff;
  }
  .date input {
    flex: 1;
    width: 0;
    padding: 0 3px;
    border: 0;
    outline: 0;
    background: none;
    color: #111;
    direction: ltr;
    text-align: right;
  }
  .date button {
    width: 18px;
    border: 1px solid #6f95c8;
    background: #c3dbfa;
  }
  .date .cal {
    width: 28px;
    border-right: 0;
  }
  .date .ic {
    width: 18px;
    height: 19px;
  }
  .splitter {
    display: flex;
    align-items: center;
    justify-content: center;
    gap: 10px;
    height: 5px;
    margin-left: -2px;
    background: linear-gradient(#cfe0f8, #86aee2 60%, #d7e6fa);
  }
  .splitter b {
    width: 45px;
    height: 3px;
    background: repeating-linear-gradient(90deg, #111 0 3px, transparent 3px 5px);
  }
  .splitter i {
    width: 7px;
    height: 4px;
    background: #111;
    clip-path: polygon(50% 0, 100% 100%, 70% 100%, 50% 50%, 30% 100%, 0 100%);
  }

  .tabs {
    margin-left: -2px;
    padding: 0 1px 0 0;
    border-bottom: 2px solid #b0c0dc;
  }
  .tab-row {
    display: flex;
    gap: 1px;
    height: 30px;
  }
  .tab {
    flex: 0 1 164px;
    gap: 4px;
    padding: 0 6px 0 4px;
    border: 1px solid #8ba0cc;
    border-bottom: 0;
    border-radius: 2px 2px 0 0;
    background: var(--glossy);
    box-shadow: inset 0 0 0 1px #e6effb;
    font-size: 13px;
    white-space: nowrap;
  }
  .tab.active {
    background: #fdfeff;
    font-weight: 700;
  }
  .tab:has(.pin-doc) span {
    flex: 1;
  }
  .pin-doc {
    width: 18px;
    height: 20px;
  }
  .filters {
    display: flex;
    align-items: center;
    gap: 7px;
    height: 55px;
    padding: 0 9px;
  }
  .blank {
    width: 50px;
    height: 24px;
    border: 1px solid #7fa5da;
    background: linear-gradient(#c8e0ff, #b4d3fc);
  }
  .filter-box {
    flex: 1;
    padding: 5px 7px;
    border: 1px solid var(--line);
    border-radius: 8px;
    background: #c8d9ef;
  }
  .filter-box button {
    gap: 6px;
    justify-content: flex-start;
    width: 331px;
    height: 24px;
    padding-right: 4px;
    border: 1px solid #4c7dc0;
    background: linear-gradient(#d3e5fd 0%, #a9ccfb 50%, #bcd8ff 100%);
    color: #111;
    white-space: nowrap;
  }

  /* data grid */
  .grid {
    display: flex;
    flex: 1;
    flex-direction: column;
    min-height: 0;
    overflow: hidden;
    border-right: 1px solid var(--line);
    background: #fff;
  }
  .group-bar {
    display: flex;
    align-items: center;
    height: 42px;
    padding: 0 5px;
    border-top: 1px solid #5f8bcc;
    background: #a5bedf;
  }
  .group-bar span {
    width: 361px;
    height: 28px;
    line-height: 28px;
    border-radius: 5px;
    background: linear-gradient(#f4f8fd, #d4e2f3);
    text-align: center;
    white-space: nowrap;
  }
  table {
    width: 100%;
    border-spacing: 0;
    table-layout: fixed;
  }
  th, td {
    height: 22px;
    padding: 0 6px 0 0;
    overflow: hidden;
    line-height: 20px;
    text-align: right;
    white-space: nowrap;
  }
  th {
    position: relative;
    height: 28px;
    border: solid var(--line);
    border-width: 1px 0;
    background:
      linear-gradient(var(--line), var(--line)) left center / 1px 18px no-repeat,
      linear-gradient(#e2eaf5 0%, #d6e3f3 48%, #c2d4ec 52%, #d0e0f3 100%);
    font-weight: 400;
  }
  .sort {
    position: absolute;
    left: 7px;
    top: 12px;
    border: 5px solid transparent;
    border-top: 0;
    border-bottom: 5px solid #a5cffb;
  }
  .find svg {
    width: 21px;
    height: 21px;
    margin-right: 1px;
  }
  td {
    border: dotted #a9c0e4;
    border-width: 0 0 1px 1px;
    color: #161616;
  }
  .filter-row td {
    height: 25px;
  }
  .filter-row svg {
    width: 18px;
    height: 16px;
    margin-right: 20px;
  }
  .gap td {
    height: 5px;
    padding: 0;
    border: 0;
    border-bottom: 1px solid var(--line);
    background: #d3e2f4;
  }
  tbody tr:nth-child(even) td {
    height: 23px;
    background: #ebf3ff;
  }
  tr td.no,
  tbody tr:nth-child(even) td.no {
    padding-right: 1px;
    border: 0;
    border-bottom: 1px solid var(--line);
    background: linear-gradient(#dfe9f6 0%, #d0dff1 48%, #c0d3eb 52%, #cfdff2 100%);
    color: #2b579a;
  }
  td.neg {
    color: #f0101c;
  }
  bdo {
    unicode-bidi: isolate;
  }
  .empty {
    flex: 1;
    border-bottom: 5px solid #c5d7ee;
  }
  .totals td {
    height: 24px;
    border-top: 1px dotted #222;
    border-bottom: 1px dotted #222;
    border-left-color: #e6eefa;
    background: #afc3e9;
  }
  .totals tr td.no {
    padding-right: 24px;
    color: #6f95c6;
    font-size: 16px;
  }
  .hbar {
    display: flex;
    align-items: center;
    height: 22px;
    padding: 0 8px;
    border-bottom: 1px solid var(--line);
    background: #f3f5f8;
  }
  .go-left {
    border-left: 0;
    border-right-color: #4a5c80;
  }
  .go-right {
    border-right: 0;
    border-left-color: #4a5c80;
  }
  .hthumb {
    flex: 1;
    display: grid;
    place-items: center;
    height: 18px;
    margin: 0 13px 0 30px;
    border: 1px solid #7485a3;
    border-radius: 2px;
    background: linear-gradient(#e8edf3 0%, #dde4ec 50%, #cbd5df 55%, #d3dce5 100%);
  }
  .hthumb b {
    width: 9px;
    height: 9px;
    background: repeating-linear-gradient(90deg, #77839c 0 1px, transparent 1px 3px);
  }
  .tools {
    display: flex;
    align-items: center;
    height: 31px;
    padding: 0;
    border-bottom: 1px solid var(--line);
    border-radius: 0 0 4px 4px;
    background: linear-gradient(#e3efff, #d0e4ff 60%, #b3d3ff);
  }
  .tools button {
    width: 30px;
    height: 28px;
  }
  .tools hr {
    width: 1px;
    height: 15px;
    margin: 0 5px;
    border: 0;
    background: #8fa9cf;
  }
  .tools .on {
    border-radius: 3px;
    background: linear-gradient(#fbd9a6, #f9b65c 50%, #fddc8e);
    box-shadow: inset 0 0 0 1px #eab56c;
  }
  .tools .wide {
    gap: 8px;
    width: 44px;
  }
  .caret {
    border: 4px solid transparent;
    border-top-color: #24458c;
    border-bottom: 0;
  }
  .tools > .caret {
    margin: 0 4px;
  }
  .child-status {
    height: 33px;
    margin-bottom: 5px;
    background: linear-gradient(#c9dcf5 0%, #cfe1f8 30%, #b4cff4 34%, #d8e7fb 100%);
  }
  .notch {
    position: absolute;
    top: 49%;
    width: 5px;
    height: 32px;
    border-top: 1px solid #6f93c4;
    background: linear-gradient(#dbe8f8, #b5cff2 50%, #d3e3f8);
  }
  .near {
    right: 4px;
  }
  .far {
    left: 0;
  }

  /* dock and status bar */
  .dock {
    display: flex;
    justify-content: flex-end;
    height: 35px;
    padding: 4px 7px;
  }
  .dock button {
    width: 53px;
    height: 26px;
    border: 1px solid #eef4fb;
    background: #d5e4f3;
    font-size: 13px;
  }
  .status {
    display: flex;
    align-items: center;
    gap: 16px;
    height: 34px;
    padding-left: 6px;
    border-top: 1px solid #e8f1fd;
    background: linear-gradient(#d6e5f8 0%, #cadef8 33%, #b5d0f5 36%, #d5e5fa 100%);
    color: #3c4f9c;
    white-space: nowrap;
  }
  .user {
    width: 112px;
    margin-left: 88px;
    font-size: 13px;
  }
  .status label {
    margin-right: 18px;
  }
  .year {
    position: relative;
    width: 152px;
    height: 28px;
    margin: 0 4px 0 10px;
    direction: ltr;
  }
  .year select {
    width: 100%;
    height: 100%;
    padding: 0 26px;
    border: 1px solid #a9c5ea;
    border-radius: 0;
    background: #ebf3ff;
    color: #222;
    appearance: none;
  }
  .year .caret {
    position: absolute;
    left: 8px;
    top: 13px;
  }
  .wide-gap {
    margin-right: 14px;
  }
  .support {
    display: flex;
    align-items: center;
    gap: 12px;
    margin-right: auto;
    color: #3a1fe0;
  }
  .support svg {
    width: 19px;
    height: 20px;
  }
</style>
